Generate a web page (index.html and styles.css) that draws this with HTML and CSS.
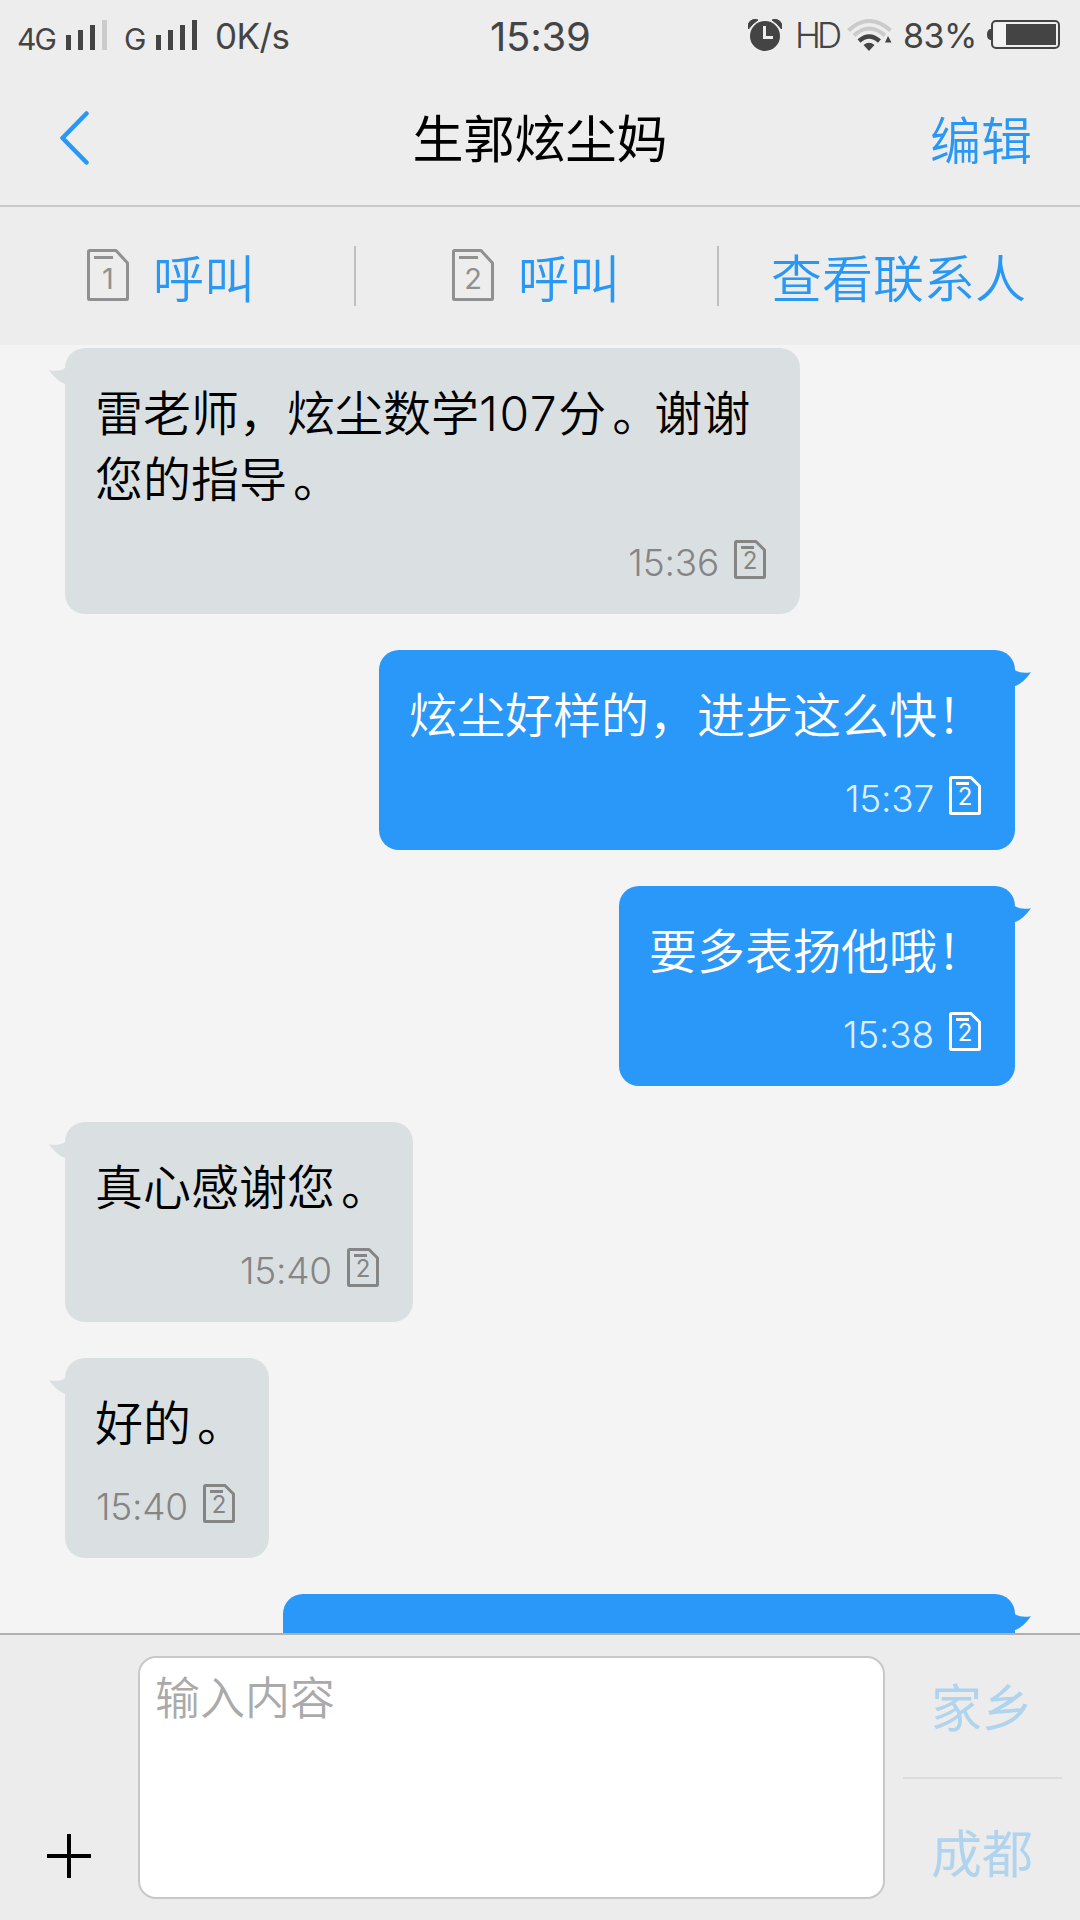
FILE: index.html
```html
<!DOCTYPE html>
<html lang="zh-CN">
<head>
<meta charset="utf-8">
<title>生郭炫尘妈</title>
<link rel="stylesheet" href="styles.css">
</head>
<body>
<svg class="defs" width="0" height="0" aria-hidden="true">
  <symbol id="sim" viewBox="0 0 32 39">
    <path d="M2.500 1.500H22L30.500 10V36.500a1 1 0 0 1-1 1H2.500a1 1 0 0 1-1-1V2.500a1 1 0 0 1 1-1Z" fill="none" stroke="currentColor" stroke-width="3" stroke-linejoin="round"/>
    <path d="M7 7.500H20" stroke="currentColor" stroke-width="3"/>
  </symbol>
  <symbol id="sim-lg" viewBox="0 0 42 52">
    <path d="M2.500 1.500H29L40.500 14V49.500a1 1 0 0 1-1 1H2.500a1 1 0 0 1-1-1V2.500a1 1 0 0 1 1-1Z" fill="none" stroke="currentColor" stroke-width="3" stroke-linejoin="round"/>
    <path d="M7 8.500H26" stroke="currentColor" stroke-width="3"/>
  </symbol>
  <symbol id="tail" viewBox="0 0 16 16">
    <path d="M0 2.300Q11 4 16 0V16Q8 13.500 0 2.300Z" fill="currentColor"/>
  </symbol>
</svg>
<div class="phone">
  <div class="status">
    <div class="status-left">
      <span class="net net-a">4G</span>
      <svg class="bars" width="41" height="30" viewBox="0 0 41 30"><path d="M0 15h5v15H0zM12 10h5v20h-5zM24 5h5v25h-5z" fill="#444"/><path d="M36 0h5v30h-5z" fill="#cbcbcb"/></svg>
      <span class="net net-b">G</span>
      <svg class="bars" width="41" height="30" viewBox="0 0 41 30"><path d="M0 15h5v15H0zM12 10h5v20h-5zM24 5h5v25h-5zM36 0h5v30h-5z" fill="#444"/></svg>
      <span class="speed">0K/s</span>
    </div>
    <span class="clock">15:39</span>
    <div class="status-right">
      <svg class="alarm" width="34" height="32" viewBox="0 0 34 32">
        <circle cx="17" cy="17" r="15" fill="#444"/>
        <path d="M0.500 10A7 7 0 0 1 10 1Q5 4 0.500 10ZM24 1A7 7 0 0 1 33.500 10Q29 4 24 1Z" fill="#444" stroke="#444" stroke-width="1"/>
        <path d="M16.500 7V18.500H25" fill="none" stroke="#ededed" stroke-width="3"/>
      </svg>
      <span class="hd">HD</span>
      <svg class="wifi" width="45" height="32" viewBox="0 0 45 32">
        <path d="M1.500 11.500Q22 -7.500 43.500 11.500M7 16.500Q22 2.500 38 16.500" fill="none" stroke="#cbcbcb" stroke-width="4"/>
        <path d="M12 22Q22 13 32.500 22" fill="none" stroke="#444" stroke-width="4.500"/>
        <path d="M16.500 26Q22 21.500 27.500 26L22 32ZM38 23.500L41 17L44.500 23.500Z" fill="#444"/>
      </svg>
      <span class="percent">83%</span>
      <svg class="battery" width="73" height="29" viewBox="0 0 73 29">
        <path d="M4 9H3Q0 10 0 14.500T3 20H4Z" fill="#444"/>
        <rect x="5" y="1" width="67" height="27" rx="4" fill="none" stroke="#444" stroke-width="2"/>
        <rect x="7.500" y="3.500" width="62" height="22" rx="1.500" fill="#f2f2f2"/>
        <rect x="19" y="4" width="50" height="21" fill="#444"/>
      </svg>
    </div>
  </div>

  <header class="header">
    <svg class="back" width="30" height="56" viewBox="0 0 30 56"><path d="M27.500 3.500L3.500 28L27.500 52.500" fill="none" stroke="#2998f4" stroke-width="4.500" stroke-linecap="round" stroke-linejoin="round"/></svg>
    <h1 class="title">生郭炫尘妈</h1>
    <span class="edit">编辑</span>
  </header>

  <nav class="actions">
    <div class="action call">
      <span class="sim-lg"><svg width="42" height="52"><use href="#sim-lg"/></svg><b>1</b></span>
      <span>呼叫</span>
    </div>
    <div class="action call call-2">
      <span class="sim-lg"><svg width="42" height="52"><use href="#sim-lg"/></svg><b>2</b></span>
      <span>呼叫</span>
    </div>
    <div class="action contact"><span>查看联系人</span></div>
  </nav>

  <main class="messages">
    <div class="bubble in long">
      <svg class="tail" width="16" height="16"><use href="#tail"/></svg>
      <p>雷老师，炫尘数学<span class="num">107</span>分<span class="stop">。</span>谢谢<br>您的指导<span class="stop">。</span></p>
      <div class="meta"><time>15:36</time><span class="sim"><svg width="32" height="39"><use href="#sim"/></svg><b>2</b></span></div>
    </div>
    <div class="bubble out">
      <svg class="tail" width="16" height="16"><use href="#tail"/></svg>
      <p>炫尘好样的，进步这么快！</p>
      <div class="meta"><time>15:37</time><span class="sim"><svg width="32" height="39"><use href="#sim"/></svg><b>2</b></span></div>
    </div>
    <div class="bubble out">
      <svg class="tail" width="16" height="16"><use href="#tail"/></svg>
      <p>要多表扬他哦！</p>
      <div class="meta"><time>15:38</time><span class="sim"><svg width="32" height="39"><use href="#sim"/></svg><b>2</b></span></div>
    </div>
    <div class="bubble in">
      <svg class="tail" width="16" height="16"><use href="#tail"/></svg>
      <p>真心感谢您<span class="stop">。</span></p>
      <div class="meta"><time>15:40</time><span class="sim"><svg width="32" height="39"><use href="#sim"/></svg><b>2</b></span></div>
    </div>
    <div class="bubble in">
      <svg class="tail" width="16" height="16"><use href="#tail"/></svg>
      <p>好的<span class="stop">。</span></p>
      <div class="meta"><time>15:40</time><span class="sim"><svg width="32" height="39"><use href="#sim"/></svg><b>2</b></span></div>
    </div>
    <div class="bubble out partial">
      <svg class="tail" width="16" height="16"><use href="#tail"/></svg>
    </div>
  </main>

  <footer class="composer">
    <svg class="plus" width="44" height="44" viewBox="0 0 44 44"><path d="M22 0V44M0 22H44" stroke="#000" stroke-width="4"/></svg>
    <div class="input">输入内容</div>
    <div class="send">
      <span>家乡</span>
      <span>成都</span>
    </div>
  </footer>
</div>
</body>
</html>
```
FILE: styles.css
```css
* { box-sizing: border-box; }
body {
  margin: 0;
  font-family: Inter, "Noto Sans CJK SC", sans-serif;
  font-weight: 350;
  color: #000;
}
.defs { position: absolute; }
.phone {
  width: 1080px;
  height: 1920px;
  display: flex;
  flex-direction: column;
  background: #f4f4f4;
  overflow: hidden;
}
svg { display: block; flex: none; }
b { font-weight: 400; }

/* Status bar */
.status {
  height: 72px;
  background: #ededed;
  color: #444;
  display: grid;
  grid-template-columns: 490px 100px 1fr;
  align-items: start;
  white-space: nowrap;
}
.status-left, .status-right { display: flex; }
.status-left { padding-left: 17px; }
.status-left span, .status-right span, .clock { line-height: 40px; font-weight: 400; }
.net { font-size: 30px; padding-top: 19px; letter-spacing: -2px; }
.net-a { width: 49px; }
.net-b { width: 32px; margin-left: 17px; }
.bars { margin-top: 20px; }
.speed { font-size: 35px; padding-top: 16px; margin-left: 18px; letter-spacing: -0.6px; }
.clock { font-size: 40px; padding-top: 17px; letter-spacing: -0.2px; }
.status-right { padding-left: 158px; }
.alarm { margin-top: 19px; }
.hd { width: 52px; margin-left: 13px; font-size: 35px; padding-top: 15px; letter-spacing: -4px; }
.status-right .hd { font-weight: 300; }
.wifi { margin-top: 19px; }
.percent { width: 84px; margin-left: 11px; font-size: 34px; padding-top: 16px; letter-spacing: -0.5px; }
.battery { margin-top: 20px; }

/* Title bar */
.header {
  height: 135px;
  background: #ededed;
  border-bottom: 2px solid #c8c8c8;
  display: grid;
  grid-template-columns: 1fr 255px 1fr;
  align-items: center;
  font-size: 51px;
  line-height: 66px;
}
.back { margin: -2px 0 0 59px; }
.title { margin: 0; padding-top: 2px; font-size: 51px; font-weight: 400; text-align: center; white-space: nowrap; }
.edit { justify-self: end; padding: 7px 48px 0 0; color: #2998f4; }

/* Quick actions */
.actions {
  height: 138px;
  background: #ededed;
  display: grid;
  grid-template-columns: 356px 363px 361px;
  align-items: center;
  font-size: 51px;
  line-height: 60px;
  color: #2998f4;
}
.action { display: flex; align-items: center; height: 60px; }
.call { gap: 24px; padding-left: 87px; border-right: 2px solid #bfbfbf; }
.call-2 { padding-left: 96px; }
.contact { padding-left: 52px; }
.action > span:last-child { padding-top: 7px; }
.sim-lg, .sim { position: relative; color: #909090; }
.sim-lg { margin-top: -2px; }
.sim-lg b, .sim b { position: absolute; left: 0; width: 100%; text-align: center; }
.sim-lg b { top: 15px; font-size: 29px; line-height: 30px; }

/* Conversation */
.messages {
  flex: 1;
  min-height: 0;
  overflow: hidden;
  padding: 3px 65px 0;
  display: flex;
  flex-direction: column;
  gap: 36px;
}
.bubble {
  flex: none;
  position: relative;
  padding: 33px 30px 35px;
  border-radius: 20px;
  font-size: 48px;
  line-height: 66px;
}
.bubble p { margin: 0; white-space: nowrap; }
.long { width: 735px; }
.stop { display: inline-block; width: 48px; height: 66px; vertical-align: top; text-indent: 6px; }
.num { letter-spacing: 1.6px; }
.in { align-self: flex-start; background: #dae0e2; }
.out { align-self: flex-end; background: #2998f8; color: #fff; }
.tail { position: absolute; top: 20px; }
.in .tail { left: -16px; color: #dae0e2; }
.out .tail { right: -16px; color: #2998f8; transform: scaleX(-1); }
.meta {
  margin: 27px 4px 0 0;
  height: 39px;
  display: flex;
  justify-content: flex-end;
  gap: 15px;
  color: #858585;
}
time { font-size: 37px; font-weight: 300; line-height: 40px; padding-top: 3px; margin-left: -10px; letter-spacing: -0.2px; }
.sim { color: #858585; }
.sim b { top: 9px; font-size: 24px; line-height: 24px; }
.out .meta { color: #dfeefd; }
.out .sim { color: #fff; }
.partial { width: 732px; height: 200px; }

/* Composer */
.composer {
  height: 287px;
  background: #ececec;
  border-top: 2px solid #b0b0b0;
  display: grid;
  grid-template-columns: 138px 747px 1fr;
}
.plus { margin: 199px 0 0 47px; }
.input {
  margin-top: 21px;
  height: 243px;
  border: 2px solid #c8c8c8;
  border-radius: 18px;
  background: #fff;
  padding: 11px 15px;
  font-size: 45px;
  line-height: 60px;
  color: #aaa;
}
.send {
  margin: 0 18px;
  display: grid;
  grid-template-rows: 144px 141px;
  font-size: 51px;
  line-height: 60px;
  color: #b0d3ee;
}
.send span { padding: 46px 0 0 28px; font-weight: 400; }
.send span:first-child { padding-top: 44px; border-bottom: 2px solid #dcdcdc; }
```
